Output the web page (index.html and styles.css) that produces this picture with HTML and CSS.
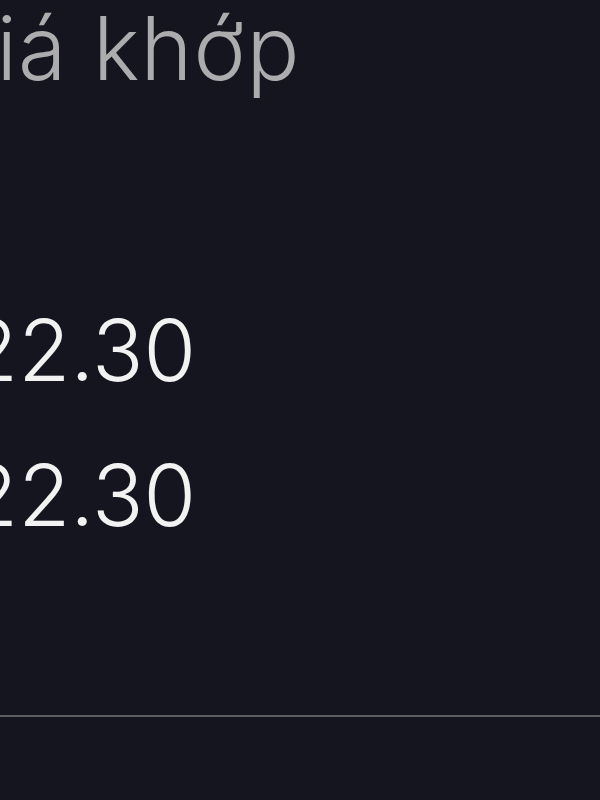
FILE: index.html
```html
<!DOCTYPE html>
<html>
<head>
  <meta charset="utf-8" />
  <title>Giá khớp</title>
  <link rel="stylesheet" href="styles.css">
</head>
<body>
<div class="panel">
  <div class="label">Giá khớp</div>
  <div class="rows">
    <div class="price">22.30</div>
    <div class="price">22.30</div>
  </div>
  <div class="divider"></div>
</div>
</body>
</html>
```

FILE: styles.css
```css
html, body {
  margin: 0;
  padding: 0;
  height: 100%;
  background: #15151f;
  overflow: hidden;
  font-family: Inter, "Noto Sans", sans-serif;
}

.panel {
  display: flex;
  flex-direction: column;
}

/* label is cropped on the left, as in the zoomed view */
.label {
  margin-left: -70px;
  font-size: 88px;
  line-height: 96px;
  letter-spacing: 1px;
  font-weight: 300;
  color: #acacae;
  white-space: nowrap;
}

.rows {
  display: flex;
  flex-direction: column;
  padding-top: 182px;
}

.price {
  margin-left: -34px;
  font-size: 85px;
  line-height: 145px;
  font-weight: 300;
  color: #f2f2f2;
  white-space: nowrap;
}

.divider {
  margin-top: 147px;
  height: 2px;
  background: #5c5c62;
}
```
